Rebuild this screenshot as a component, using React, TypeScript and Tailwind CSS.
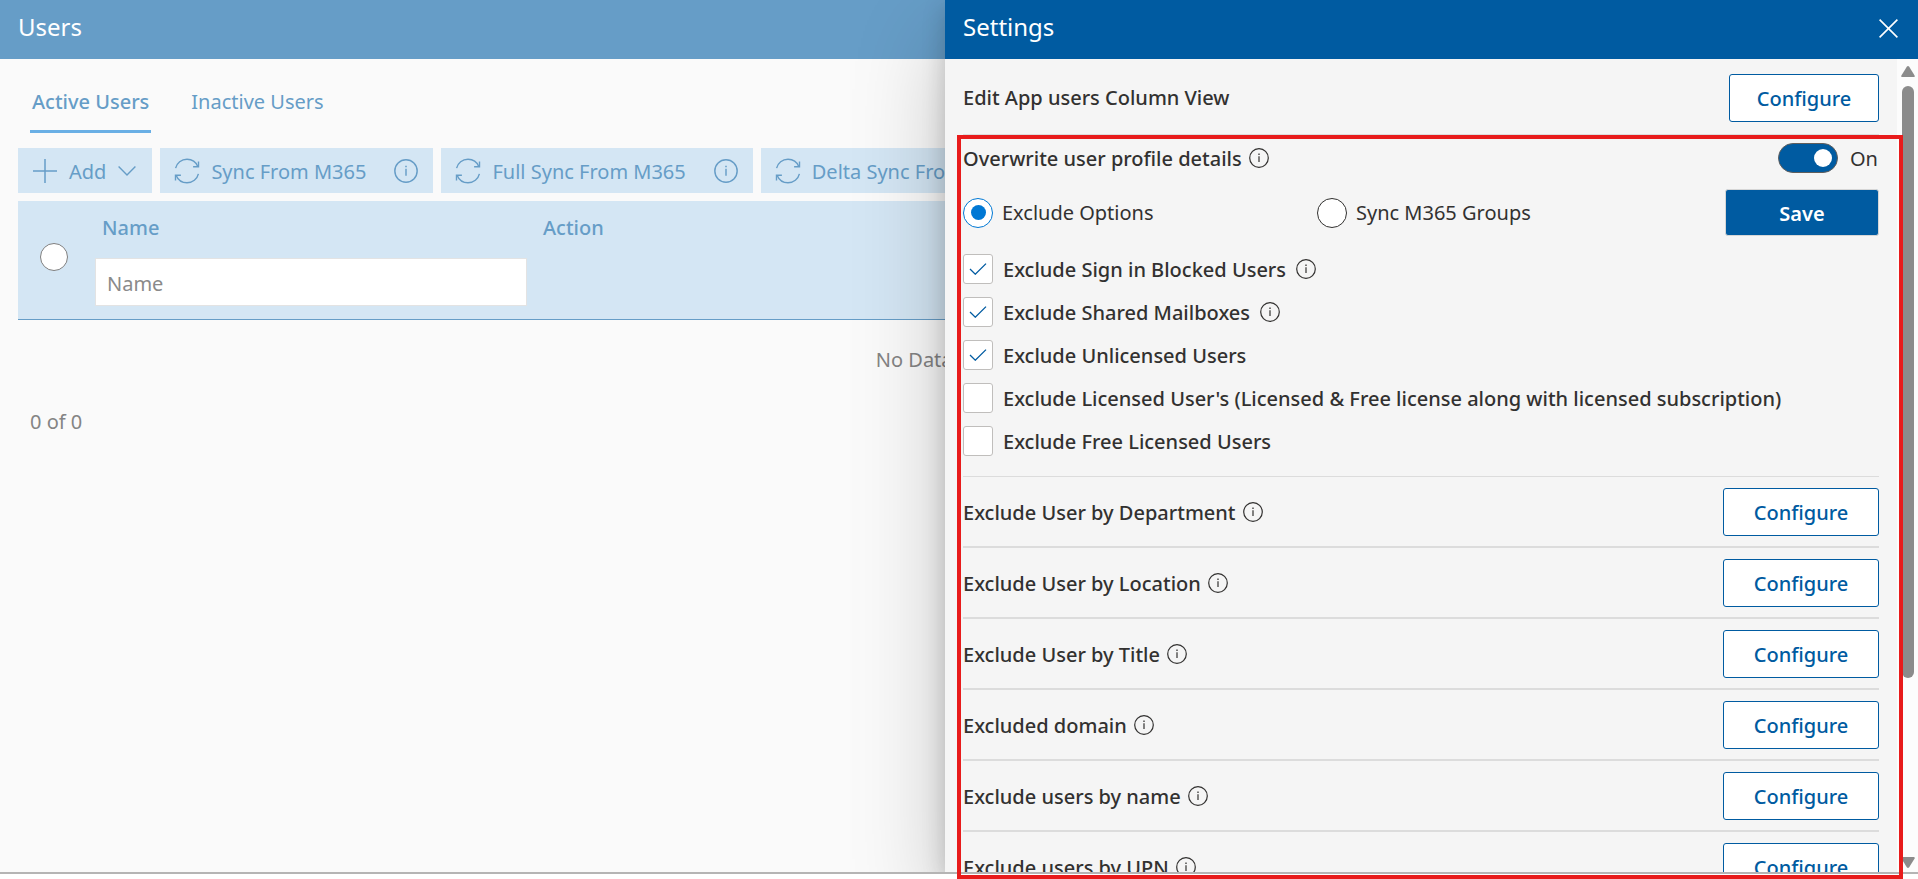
import { useState } from "react";

function InfoIcon({ className = "size-5" }: { className?: string }) {
  return (
    <svg viewBox="0 0 20 20" className={`shrink-0 ${className}`} fill="none" stroke="currentColor" aria-hidden="true">
      <circle cx="10" cy="10" r="9.3" strokeWidth="1.2" />
      <path d="M10 8.2V14" strokeWidth="1.2" />
      <path d="M10 5.6V6.9" strokeWidth="1.3" />
    </svg>
  );
}

function SyncIcon() {
  return (
    <svg viewBox="0 0 26 26" className="size-[26px] shrink-0" fill="none" stroke="currentColor" strokeWidth="1.4" aria-hidden="true">
      <path d="M1.600 10.200C2.800 5 7.400 1.200 13 1.200c4.800 0 8.900 2.600 10.800 7.300" />
      <path d="M24.500 3.400v5.400h-5.400" />
      <path d="M24.400 15.800C23.200 21 18.600 24.800 13 24.800c-4.800 0-8.900-2.600-10.800-7.300" />
      <path d="M1.500 22.600v-5.400h5.400" />
    </svg>
  );
}

function ToolbarButton({ label }: { label: string }) {
  return (
    <button type="button" className="flex h-[45px] items-center gap-[11px] bg-[#d4e6f4] pr-[15px] pl-3.5 whitespace-nowrap">
      <SyncIcon />
      <span className="pt-0.5">{label}</span>
      <InfoIcon className="ml-[17px] size-6" />
    </button>
  );
}

function UsersPage() {
  return (
    <main className="flex h-full flex-col bg-[#fafafa] text-[20px] leading-7 text-[#669dc7]">
      <header className="flex h-[59px] shrink-0 items-center bg-[#669dc7] px-[18px] pb-1.5 text-[24px] leading-8 text-white">
        <h1>Users</h1>
      </header>
      <nav className="flex gap-2.5 px-[30px] pt-[21px]">
        <a href="#active" className="border-b-3 border-[#69afe5] px-0.5 pt-2 pb-3.5 font-medium">
          Active Users
        </a>
        <a href="#inactive" className="px-[30px] pt-2">
          Inactive Users
        </a>
      </nav>
      <div className="flex gap-2 overflow-hidden px-[18px] pt-[15px]">
        <button type="button" className="flex h-[45px] shrink-0 items-center gap-3 bg-[#d4e6f4] pr-4 pl-[15px]">
          <svg viewBox="0 0 24 24" className="size-6" stroke="currentColor" strokeWidth="1.5" aria-hidden="true">
            <path d="M12 0v24M0 12h24" />
          </svg>
          <span className="pt-0.5">Add</span>
          <svg viewBox="0 0 18 10" className="w-[18px]" fill="none" stroke="currentColor" strokeWidth="1.4" aria-hidden="true">
            <path d="M.6.6 9 9 17.400.6" />
          </svg>
        </button>
        <ToolbarButton label="Sync From M365" />
        <ToolbarButton label="Full Sync From M365" />
        <ToolbarButton label="Delta Sync From M365" />
      </div>
      <div className="px-[18px] pt-2">
        <table className="w-full table-fixed border-separate border-spacing-0">
          <colgroup>
            <col className="w-[68px]" />
            <col className="w-[451px]" />
            <col />
          </colgroup>
          <thead>
            <tr className="h-[119px] bg-[#d4e6f4] text-left align-top">
              <th className="border-b border-[#669dc7] pt-[42px] pl-[22px]">
                <input
                  type="radio"
                  aria-label="Select all users"
                  className="block size-7 appearance-none rounded-full border border-[#7f7f7f] bg-white"
                />
              </th>
              <th className="border-b border-[#669dc7] pt-[13px] pr-2.5 pl-[9px] font-medium">
                <label htmlFor="name-filter" className="block px-[7px]">
                  Name
                </label>
                <input
                  id="name-filter"
                  type="text"
                  placeholder="Name"
                  className="mt-4 block h-12 w-full border border-[#e3e3e3] bg-white px-[11px] pt-0.5 font-normal text-[#8a8a8a] placeholder:text-[#8a8a8a]"
                />
              </th>
              <th className="border-b border-[#669dc7] px-1.5 pt-[13px] font-medium">Action</th>
            </tr>
          </thead>
          <tbody>
            <tr>
              <td colSpan={3} className="pt-[26px] text-center text-[#848484]">
                No Data Available
              </td>
            </tr>
          </tbody>
        </table>
        <p className="px-3 pt-[34px] text-[#848484]">0 of 0</p>
      </div>
    </main>
  );
}

function ConfigureButton({ label, className = "w-[156px]" }: { label: string; className?: string }) {
  return (
    <button
      type="button"
      aria-label={`Configure ${label}`}
      className={`h-12 shrink-0 rounded-[3px] border border-[#005ba1] bg-white pt-0.5 font-medium text-[#005ba1] ${className}`}
    >
      Configure
    </button>
  );
}

const exclusions = [
  { id: "blocked", label: "Exclude Sign in Blocked Users", on: true, info: true },
  { id: "shared", label: "Exclude Shared Mailboxes", on: true, info: true },
  { id: "unlicensed", label: "Exclude Unlicensed Users", on: true, info: false },
  {
    id: "licensed",
    label: "Exclude Licensed User's (Licensed & Free license along with licensed subscription)",
    on: false,
    info: false,
  },
  { id: "free", label: "Exclude Free Licensed Users", on: false, info: false },
];

const rules = [
  "Exclude User by Department",
  "Exclude User by Location",
  "Exclude User by Title",
  "Excluded domain",
  "Exclude users by name",
  "Exclude users by UPN",
];

function RadioOption({ label, checked, onSelect }: { label: string; checked: boolean; onSelect: () => void }) {
  return (
    <label className="flex items-center gap-[9px]">
      <span className="grid place-items-center">
        <input
          type="radio"
          name="sync-mode"
          checked={checked}
          onChange={onSelect}
          className="col-start-1 row-start-1 size-[30px] appearance-none rounded-full border border-[#323130] bg-white checked:border-[#0078d4]"
        />
        {checked && <span className="pointer-events-none col-start-1 row-start-1 size-[15px] rounded-full bg-[#0078d4]" />}
      </span>
      {label}
    </label>
  );
}

function SettingsPanel() {
  const [mode, setMode] = useState("exclude");
  const [overwrite, setOverwrite] = useState(true);
  const [picked, setPicked] = useState<Record<string, boolean>>(
    Object.fromEntries(exclusions.map((e) => [e.id, e.on])),
  );

  return (
    <aside
      aria-label="Settings"
      className="absolute inset-y-0 right-0 flex w-[973px] max-w-full flex-col bg-[#f5f5f5] text-[20px] leading-7 text-[#323130] shadow-[0_38px_86px_rgba(0,0,0,0.22),0_7px_22px_rgba(0,0,0,0.18)]"
    >
      <header className="flex h-[59px] shrink-0 items-center justify-between bg-[#005ba1] pr-5 pb-1.5 pl-[18px] text-white">
        <h2 className="text-[24px] leading-8">Settings</h2>
        <button type="button" aria-label="Close" className="pt-1">
          <svg viewBox="0 0 19 19" className="size-[19px]" stroke="currentColor" strokeWidth="1.6" aria-hidden="true">
            <path d="M.6.6l17.800 17.800M18.400.6.6 18.400" />
          </svg>
        </button>
      </header>
      <div className="flex min-h-0 flex-1">
        <div className="min-w-0 flex-1 overflow-hidden px-[18px]">
          <div className="flex h-[76px] items-center justify-between border-b border-[#dcdcdc] pt-[3px]">
            <span className="font-medium">Edit App users Column View</span>
            <ConfigureButton label="column view" className="w-[150px]" />
          </div>
          <div className="flex items-center justify-between pt-2">
            <span className="flex items-center gap-[7px] font-medium">
              <span className="pt-0.5">Overwrite user profile details</span>
              <InfoIcon />
            </span>
            <label className="flex items-center gap-3">
              <span className="grid items-center">
                <input
                  type="checkbox"
                  role="switch"
                  aria-label="Overwrite user profile details"
                  checked={overwrite}
                  onChange={() => setOverwrite(!overwrite)}
                  className="peer col-start-1 row-start-1 h-[30px] w-[60px] appearance-none rounded-full border border-[#605e5c] bg-white checked:bg-[#005ba1]"
                />
                <span className="pointer-events-none col-start-1 row-start-1 ml-1.5 size-[18px] rounded-full bg-[#605e5c] peer-checked:ml-9 peer-checked:bg-white" />
              </span>
              <span className="w-[29px] pt-0.5">{overwrite ? "On" : "Off"}</span>
            </label>
          </div>
          <div className="flex items-center pt-4">
            <div className="grid flex-1 grid-cols-[354px_1fr]">
              <RadioOption label="Exclude Options" checked={mode === "exclude"} onSelect={() => setMode("exclude")} />
              <RadioOption label="Sync M365 Groups" checked={mode === "groups"} onSelect={() => setMode("groups")} />
            </div>
            <button
              type="button"
              className="h-[47px] w-[154px] rounded-[3px] border border-[#d6d6d6] bg-[#005ba1] pt-[3px] font-semibold text-white"
            >
              Save
            </button>
          </div>
          <div className="flex flex-col gap-[13px] border-b border-[#dcdcdc] pt-[18px] pb-5">
            {exclusions.map((e) => (
              <label key={e.id} className="flex h-[30px] items-center gap-2.5 font-medium">
                <span className="grid place-items-center">
                  <input
                    type="checkbox"
                    checked={picked[e.id]}
                    onChange={() => setPicked({ ...picked, [e.id]: !picked[e.id] })}
                    className="col-start-1 row-start-1 size-[30px] appearance-none rounded-[3px] border border-[#c0bebc] bg-white"
                  />
                  {picked[e.id] && (
                    <svg
                      viewBox="0 0 18 12"
                      className="pointer-events-none col-start-1 row-start-1 w-[18px]"
                      fill="none"
                      stroke="#005ba1"
                      strokeWidth="1.3"
                      aria-hidden="true"
                    >
                      <path d="M1 6l5.300 5.200L17 .6" />
                    </svg>
                  )}
                </span>
                <span className="pt-0.5">{e.label}</span>
                {e.info && <InfoIcon />}
              </label>
            ))}
          </div>
          {rules.map((rule) => (
            <div key={rule} className="flex items-center justify-between border-b-2 border-[#dcdcdc] pt-[11px] pb-2.5">
              <span className="flex items-center gap-[7px] font-medium">
                <span className="pt-0.5">{rule}</span>
                <InfoIcon />
              </span>
              <ConfigureButton label={rule} />
            </div>
          ))}
        </div>
        <div className="flex w-[21px] shrink-0 flex-col items-center bg-[#fcfcfc] pt-[7px] pb-1 text-[#8b8b8b]" aria-hidden="true">
          <svg viewBox="0 0 14 11" className="w-3.5" fill="currentColor">
            <path d="M5.800.8a1.500 1.500 0 0 1 2.400 0l5.400 8.600q.6 1.600-1 1.600H1.400q-1.600 0-1-1.600z" />
          </svg>
          <div className="mt-[9px] w-3 flex-[592] rounded-full bg-[#8b8b8b]" />
          <div className="flex-[179]" />
          <svg viewBox="0 0 14 11" className="w-3.5 rotate-180" fill="currentColor">
            <path d="M5.800.8a1.500 1.500 0 0 1 2.400 0l5.400 8.600q.6 1.600-1 1.600H1.400q-1.600 0-1-1.600z" />
          </svg>
        </div>
      </div>
    </aside>
  );
}

export default function App() {
  return (
    <div className="relative h-screen overflow-hidden bg-white pb-[5px] font-['Noto_Sans','Open_Sans',sans-serif]">
      <div className="relative h-full overflow-hidden border-b-2 border-[#b5b4b4]">
        <UsersPage />
        <SettingsPanel />
      </div>
      <div className="pointer-events-none absolute top-[135px] right-[15px] bottom-0 w-[946px] max-w-full border-4 border-[#e81b1b]" />
    </div>
  );
}
